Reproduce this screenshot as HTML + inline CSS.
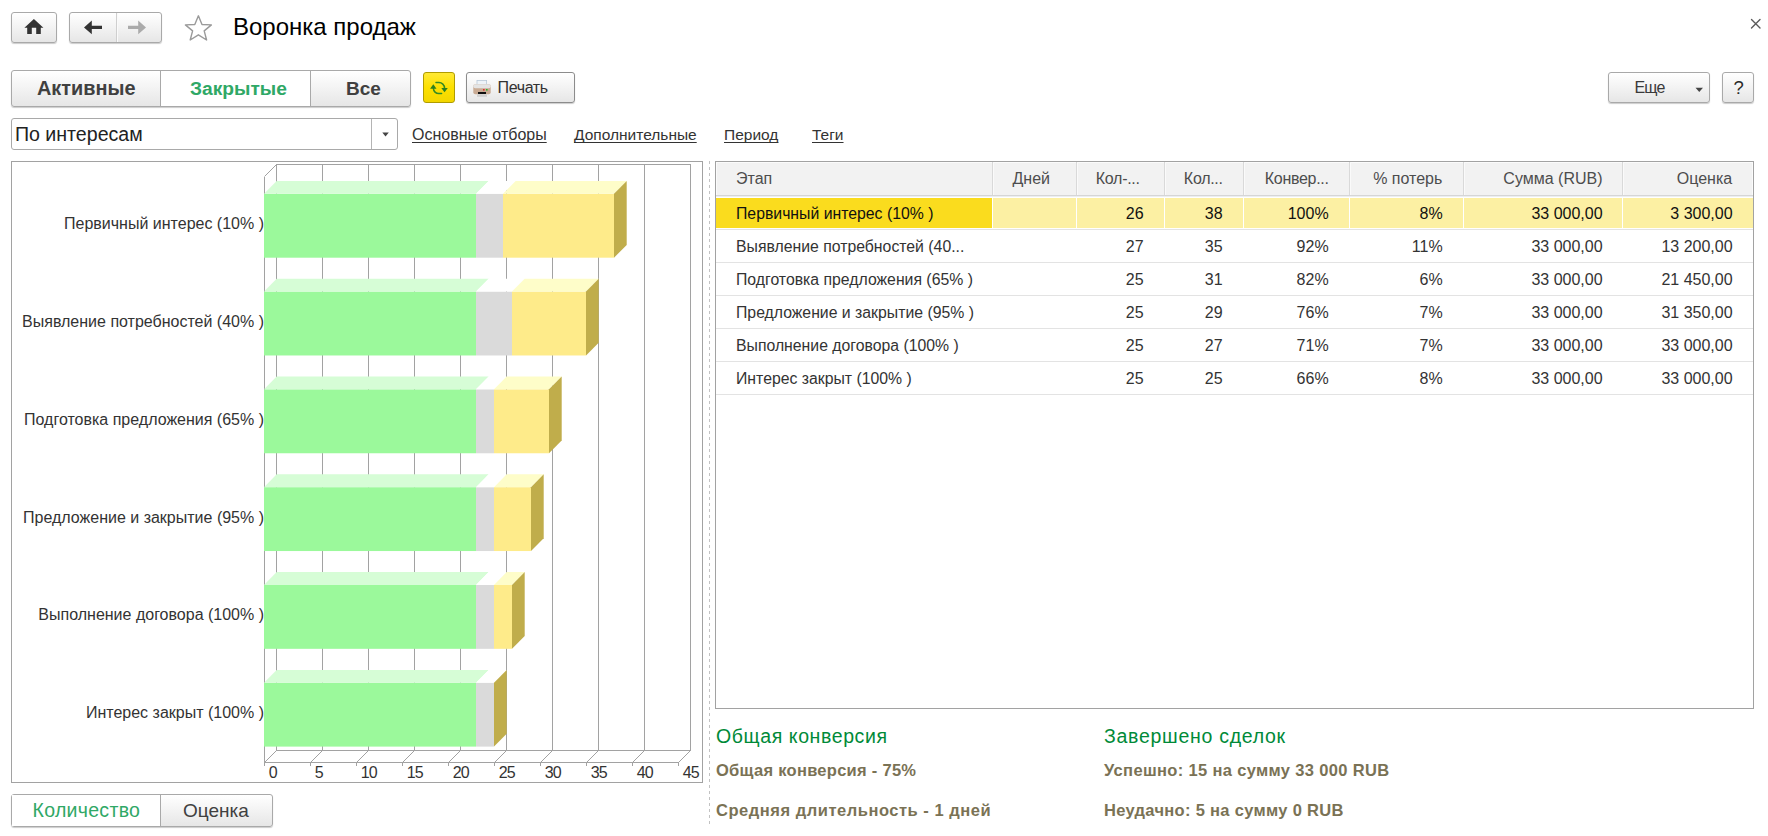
<!DOCTYPE html>
<html><head><meta charset="utf-8">
<style>
html,body{margin:0;padding:0;background:#fff;width:1768px;height:836px;overflow:hidden;position:relative;font-family:"Liberation Sans",sans-serif;}
.a{position:absolute;white-space:nowrap;}
.btn{position:absolute;box-sizing:border-box;border:1px solid #a9a9a9;border-radius:3px;background:linear-gradient(#ffffff,#f4f4f4 45%,#e6e6e6);box-shadow:0 1px 1px rgba(0,0,0,0.2);}
.t{position:absolute;white-space:nowrap;line-height:1;}
</style></head><body>

<!-- top bar -->
<div class="btn" style="left:11px;top:12px;width:46px;height:31px;"></div>
<svg class="a" style="left:0;top:0" width="240" height="50">
  <path d="M33.9 19.1 L43.4 27.7 L40.8 27.7 L40.8 34 L36.2 34 L36.2 27.7 L31.8 27.7 L31.8 34 L27.2 34 L27.2 27.7 L24.4 27.7 Z" fill="#333"/>
</svg>
<div class="btn" style="left:69px;top:12px;width:93px;height:31px;"></div>
<div class="a" style="left:116px;top:13px;width:1px;height:29px;background:#cfcfcf"></div><div class="a" style="left:117px;top:13px;width:1px;height:29px;background:#fafafa"></div>
<svg class="a" style="left:0;top:0" width="240" height="50">
  <path d="M84 27.4 L91.8 20.5 L91.8 25.7 L102 25.7 L102 29 L91.8 29 L91.8 34.3 Z" fill="#333"/>
  <path d="M146 27.4 L138.2 20.5 L138.2 25.8 L128 25.8 L128 29 L138.2 29 L138.2 34.3 Z" fill="#ababab"/>
  <path d="M198.4 15.8 L202 24.5 L211.4 24.9 L204.2 30.9 L206.6 40 L198.4 34.8 L190.2 40 L192.6 30.9 L185.4 24.9 L194.8 24.5 Z" fill="none" stroke="#9a9a9a" stroke-width="1.4" stroke-linejoin="round"/>
</svg>
<div class="t" style="left:233px;top:15px;font-size:24px;color:#000;">Воронка продаж</div>
<svg class="a" style="left:1748px;top:16px" width="16" height="16">
  <path d="M3.5 3.4 L12 11.9 M12 3.4 L3.5 11.9" stroke="#5a5a5a" stroke-width="1.4" stroke-linecap="round"/>
</svg>

<!-- row 2 -->
<div class="btn" style="left:11px;top:70px;width:400px;height:37px;"></div>
<div class="a" style="left:161px;top:71px;width:149px;height:35px;background:#fff"></div>
<div class="a" style="left:160px;top:71px;width:1px;height:35px;background:#a9a9a9"></div>
<div class="a" style="left:310px;top:71px;width:1px;height:35px;background:#a9a9a9"></div>
<div class="t" style="left:37px;top:78.8px;font-size:19.9px;font-weight:bold;color:#404040;">Активные</div>
<div class="t" style="left:190px;top:79px;font-size:19.2px;font-weight:bold;color:#2fa866;">Закрытые</div>
<div class="t" style="left:346px;top:79px;font-size:19px;font-weight:bold;color:#404040;">Все</div>

<div class="a" style="left:423px;top:72px;width:32px;height:31px;box-sizing:border-box;border:1px solid #b09c00;border-radius:3px;background:linear-gradient(#ffe935,#fde000 50%,#f3d600);"></div>
<svg class="a" style="left:423px;top:72px" width="32" height="31">
  <g fill="none" stroke="#348a22" stroke-width="1.5" stroke-linecap="round">
    <path d="M13 10.5 L15.9 10.5 A5.6 5.6 0 0 1 21.5 16"/>
    <path d="M10.4 16.4 A5.4 5.4 0 0 0 15.8 21.6 L18.6 21.6"/>
  </g>
  <path d="M7.1 16.7 L10.3 12.3 L13.5 16.7 Z" fill="#2e7f1e"/>
  <path d="M18.3 16.1 L21.5 20.3 L24.8 16.1 Z" fill="#2e7f1e"/>
</svg>

<div class="btn" style="left:466px;top:72px;width:109px;height:31px;border-color:#8c8c8c;"></div>
<svg class="a" style="left:466px;top:72px" width="30" height="31">
  <rect x="11" y="8.5" width="9.6" height="7" fill="#eef3f8" stroke="#b8c8d8" stroke-width="0.8"/>
  <rect x="7.3" y="12.2" width="17.4" height="10" rx="2" fill="#c9ab94"/>
  <rect x="7.3" y="12.2" width="17.4" height="4" rx="2" fill="#e4e4e4"/>
  <rect x="12" y="20" width="8" height="2" fill="#111"/>
  <rect x="17" y="17" width="1.6" height="1.6" fill="#e03030"/>
  <rect x="20" y="17" width="1.6" height="1.6" fill="#30b030"/>
  <rect x="11" y="22.4" width="10" height="2.4" fill="#d0d0d0"/>
</svg>
<div class="t" style="left:497.5px;top:79.5px;font-size:16px;letter-spacing:-0.35px;color:#333;">Печать</div>

<div class="btn" style="left:1608px;top:72px;width:102px;height:31px;"></div>
<div class="t" style="left:1634.5px;top:79.5px;font-size:16px;letter-spacing:-0.8px;color:#3a3a3a;">Еще</div>
<svg class="a" style="left:1690px;top:80px" width="20" height="20">
  <path d="M5.5 7.8 L13 7.8 L9.25 12 Z" fill="#444"/>
</svg>
<div class="btn" style="left:1722px;top:72px;width:32px;height:31px;"></div>
<div class="t" style="left:1733.5px;top:78.8px;font-size:18.5px;color:#2a2a2a;">?</div>

<!-- row 3 -->
<div class="a" style="left:11px;top:118px;width:387px;height:32px;box-sizing:border-box;border:1px solid #a9a9a9;border-radius:3px;background:#fff"></div>
<div class="a" style="left:371px;top:119px;width:1px;height:30px;background:#b4b4b4"></div>
<svg class="a" style="left:371px;top:118px" width="27" height="32">
  <path d="M11.3 14.4 L17.8 14.4 L14.55 18.4 Z" fill="#444"/>
</svg>
<div class="t" style="left:14.9px;top:124.5px;font-size:19.6px;color:#222;">По интересам</div>

<div class="t" style="left:412px;top:126.5px;font-size:16px;color:#333;text-decoration:underline;text-underline-offset:2px;text-decoration-skip-ink:none;">Основные отборы</div>
<div class="t" style="left:574px;top:126.5px;font-size:15.5px;color:#333;text-decoration:underline;text-underline-offset:2px;text-decoration-skip-ink:none;">Дополнительные</div>
<div class="t" style="left:724px;top:126.5px;font-size:15.5px;color:#333;text-decoration:underline;text-underline-offset:2px;text-decoration-skip-ink:none;">Период</div>
<div class="t" style="left:812px;top:126.5px;font-size:15.5px;color:#333;text-decoration:underline;text-underline-offset:2px;text-decoration-skip-ink:none;">Теги</div>

<!-- CHART -->
<svg class="a" style="left:0;top:0" width="710" height="790" shape-rendering="auto">
<rect x="11.5" y="161.5" width="691" height="621" fill="#fff" stroke="#a2a2a2" stroke-width="1"/>
<path d="M276.5 164.5 L276.5 750.5 M322.5 164.5 L322.5 750.5 M368.5 164.5 L368.5 750.5 M414.5 164.5 L414.5 750.5 M460.5 164.5 L460.5 750.5 M506.5 164.5 L506.5 750.5 M552.5 164.5 L552.5 750.5 M598.5 164.5 L598.5 750.5 M644.5 164.5 L644.5 750.5 M690.5 164.5 L690.5 750.5 M276.5 164.5 L690.5 164.5 M276.5 750.5 L690.5 750.5 M264.5 176.5 L264.5 762.5 M264.5 176.5 L276.5 164.5 M264.5 762.5 L678.5 762.5 M264.5 762.5 L276.5 750.5 M264.5 762.5 L264.5 765.5 M310.5 762.5 L322.5 750.5 M310.5 762.5 L310.5 765.5 M356.5 762.5 L368.5 750.5 M356.5 762.5 L356.5 765.5 M402.5 762.5 L414.5 750.5 M402.5 762.5 L402.5 765.5 M448.5 762.5 L460.5 750.5 M448.5 762.5 L448.5 765.5 M494.5 762.5 L506.5 750.5 M494.5 762.5 L494.5 765.5 M540.5 762.5 L552.5 750.5 M540.5 762.5 L540.5 765.5 M586.5 762.5 L598.5 750.5 M586.5 762.5 L586.5 765.5 M632.5 762.5 L644.5 750.5 M632.5 762.5 L632.5 765.5 M678.5 762.5 L690.5 750.5 M678.5 762.5 L678.5 765.5" stroke="#a2a2a2" stroke-width="1" fill="none" shape-rendering="crispEdges"/>
<path d="M264.5 762.5 L276.5 750.5 M310.5 762.5 L322.5 750.5 M356.5 762.5 L368.5 750.5 M402.5 762.5 L414.5 750.5 M448.5 762.5 L460.5 750.5 M494.5 762.5 L506.5 750.5 M540.5 762.5 L552.5 750.5 M586.5 762.5 L598.5 750.5 M632.5 762.5 L644.5 750.5 M678.5 762.5 L690.5 750.5 M264.5 176.5 L276.5 164.5" stroke="#a2a2a2" stroke-width="1" fill="none"/>
<rect x="264.0" y="193.80" width="212.00" height="63.9" fill="#9bf99b"/>
<path d="M264.0 193.80 L476.00 193.80 L488.70 181.00 L276.7 181.00 Z" fill="#d6fdd6"/>
<rect x="476.00" y="193.80" width="27.00" height="63.9" fill="#dadada"/>
<path d="M476.00 193.80 L503.00 193.80 L515.70 181.00 L488.70 181.00 Z" fill="#fff"/>
<rect x="503.00" y="193.80" width="111.00" height="63.9" fill="#feeb8a"/>
<path d="M503.00 193.80 L614.00 193.80 L626.70 181.00 L515.70 181.00 Z" fill="#fefdc9"/>
<path d="M614.00 193.80 L626.70 181.00 L626.70 244.90 L614.00 257.70 Z" fill="#c0ad4b"/>
<text x="264" y="229.3" text-anchor="end" font-family="Liberation Sans" font-size="16" fill="#333">Первичный интерес (10% )</text>
<rect x="264.0" y="291.58" width="212.00" height="63.9" fill="#9bf99b"/>
<path d="M264.0 291.58 L476.00 291.58 L488.70 278.78 L276.7 278.78 Z" fill="#d6fdd6"/>
<rect x="476.00" y="291.58" width="36.00" height="63.9" fill="#dadada"/>
<path d="M476.00 291.58 L512.00 291.58 L524.70 278.78 L488.70 278.78 Z" fill="#fff"/>
<rect x="512.00" y="291.58" width="74.00" height="63.9" fill="#feeb8a"/>
<path d="M512.00 291.58 L586.00 291.58 L598.70 278.78 L524.70 278.78 Z" fill="#fefdc9"/>
<path d="M586.00 291.58 L598.70 278.78 L598.70 342.68 L586.00 355.48 Z" fill="#c0ad4b"/>
<text x="264" y="327.1" text-anchor="end" font-family="Liberation Sans" font-size="16" fill="#333">Выявление потребностей (40% )</text>
<rect x="264.0" y="389.36" width="212.00" height="63.9" fill="#9bf99b"/>
<path d="M264.0 389.36 L476.00 389.36 L488.70 376.56 L276.7 376.56 Z" fill="#d6fdd6"/>
<rect x="476.00" y="389.36" width="18.00" height="63.9" fill="#dadada"/>
<path d="M476.00 389.36 L494.00 389.36 L506.70 376.56 L488.70 376.56 Z" fill="#fff"/>
<rect x="494.00" y="389.36" width="55.00" height="63.9" fill="#feeb8a"/>
<path d="M494.00 389.36 L549.00 389.36 L561.70 376.56 L506.70 376.56 Z" fill="#fefdc9"/>
<path d="M549.00 389.36 L561.70 376.56 L561.70 440.46 L549.00 453.26 Z" fill="#c0ad4b"/>
<text x="264" y="424.9" text-anchor="end" font-family="Liberation Sans" font-size="16" fill="#333">Подготовка предложения (65% )</text>
<rect x="264.0" y="487.14" width="212.00" height="63.9" fill="#9bf99b"/>
<path d="M264.0 487.14 L476.00 487.14 L488.70 474.34 L276.7 474.34 Z" fill="#d6fdd6"/>
<rect x="476.00" y="487.14" width="18.00" height="63.9" fill="#dadada"/>
<path d="M476.00 487.14 L494.00 487.14 L506.70 474.34 L488.70 474.34 Z" fill="#fff"/>
<rect x="494.00" y="487.14" width="37.00" height="63.9" fill="#feeb8a"/>
<path d="M494.00 487.14 L531.00 487.14 L543.70 474.34 L506.70 474.34 Z" fill="#fefdc9"/>
<path d="M531.00 487.14 L543.70 474.34 L543.70 538.24 L531.00 551.04 Z" fill="#c0ad4b"/>
<text x="264" y="522.6" text-anchor="end" font-family="Liberation Sans" font-size="16" fill="#333">Предложение и закрытие (95% )</text>
<rect x="264.0" y="584.92" width="212.00" height="63.9" fill="#9bf99b"/>
<path d="M264.0 584.92 L476.00 584.92 L488.70 572.12 L276.7 572.12 Z" fill="#d6fdd6"/>
<rect x="476.00" y="584.92" width="18.00" height="63.9" fill="#dadada"/>
<path d="M476.00 584.92 L494.00 584.92 L506.70 572.12 L488.70 572.12 Z" fill="#fff"/>
<rect x="494.00" y="584.92" width="18.00" height="63.9" fill="#feeb8a"/>
<path d="M494.00 584.92 L512.00 584.92 L524.70 572.12 L506.70 572.12 Z" fill="#fefdc9"/>
<path d="M512.00 584.92 L524.70 572.12 L524.70 636.02 L512.00 648.82 Z" fill="#c0ad4b"/>
<text x="264" y="620.4" text-anchor="end" font-family="Liberation Sans" font-size="16" fill="#333">Выполнение договора (100% )</text>
<rect x="264.0" y="682.70" width="212.00" height="63.9" fill="#9bf99b"/>
<path d="M264.0 682.70 L476.00 682.70 L488.70 669.90 L276.7 669.90 Z" fill="#d6fdd6"/>
<rect x="476.00" y="682.70" width="18.00" height="63.9" fill="#dadada"/>
<path d="M476.00 682.70 L494.00 682.70 L506.70 669.90 L488.70 669.90 Z" fill="#fff"/>
<path d="M494.00 682.70 L506.70 669.90 L506.70 733.80 L494.00 746.60 Z" fill="#c0ad4b"/>
<text x="264" y="718.2" text-anchor="end" font-family="Liberation Sans" font-size="16" fill="#333">Интерес закрыт (100% )</text>
<text x="268.8" y="778" font-family="Liberation Sans" font-size="16" letter-spacing="-0.9" fill="#333">0</text>
<text x="314.8" y="778" font-family="Liberation Sans" font-size="16" letter-spacing="-0.9" fill="#333">5</text>
<text x="360.8" y="778" font-family="Liberation Sans" font-size="16" letter-spacing="-0.9" fill="#333">10</text>
<text x="406.8" y="778" font-family="Liberation Sans" font-size="16" letter-spacing="-0.9" fill="#333">15</text>
<text x="452.8" y="778" font-family="Liberation Sans" font-size="16" letter-spacing="-0.9" fill="#333">20</text>
<text x="498.8" y="778" font-family="Liberation Sans" font-size="16" letter-spacing="-0.9" fill="#333">25</text>
<text x="544.8" y="778" font-family="Liberation Sans" font-size="16" letter-spacing="-0.9" fill="#333">30</text>
<text x="590.8" y="778" font-family="Liberation Sans" font-size="16" letter-spacing="-0.9" fill="#333">35</text>
<text x="636.8" y="778" font-family="Liberation Sans" font-size="16" letter-spacing="-0.9" fill="#333">40</text>
<text x="682.8" y="778" font-family="Liberation Sans" font-size="16" letter-spacing="-0.9" fill="#333">45</text>
</svg>

<!-- dashed separator -->
<div class="a" style="left:709px;top:161px;width:1px;height:663px;background:repeating-linear-gradient(#c2c2c2 0 3px,transparent 3px 6px);"></div>

<!-- TABLE -->
<div class="a" style="left:715px;top:161px;width:1039px;height:548px;box-sizing:border-box;border:1px solid #a2a2a2;background:#fff"></div>
<div class="a" style="left:716px;top:162px;width:1037px;height:33px;background:#f2f2f2;box-sizing:border-box;border:1px solid #fbfbfb;border-bottom:none"></div>
<div class="a" style="left:716px;top:195px;width:1037px;height:1px;background:#d6d6d6"></div>
<div class="a" style="left:716px;top:196px;width:1037px;height:1px;background:#eceef0"></div>
<div class="a" style="left:992px;top:162px;width:1px;height:33px;background:#d9d9d9"></div>
<div class="a" style="left:993px;top:162px;width:1px;height:33px;background:#fafafa"></div>
<div class="a" style="left:1076px;top:162px;width:1px;height:33px;background:#d9d9d9"></div>
<div class="a" style="left:1077px;top:162px;width:1px;height:33px;background:#fafafa"></div>
<div class="a" style="left:1164px;top:162px;width:1px;height:33px;background:#d9d9d9"></div>
<div class="a" style="left:1165px;top:162px;width:1px;height:33px;background:#fafafa"></div>
<div class="a" style="left:1243px;top:162px;width:1px;height:33px;background:#d9d9d9"></div>
<div class="a" style="left:1244px;top:162px;width:1px;height:33px;background:#fafafa"></div>
<div class="a" style="left:1349px;top:162px;width:1px;height:33px;background:#d9d9d9"></div>
<div class="a" style="left:1350px;top:162px;width:1px;height:33px;background:#fafafa"></div>
<div class="a" style="left:1463px;top:162px;width:1px;height:33px;background:#d9d9d9"></div>
<div class="a" style="left:1464px;top:162px;width:1px;height:33px;background:#fafafa"></div>
<div class="a" style="left:1622px;top:162px;width:1px;height:33px;background:#d9d9d9"></div>
<div class="a" style="left:1623px;top:162px;width:1px;height:33px;background:#fafafa"></div>
<div class="t" style="left:736px;top:170.5px;font-size:16px;color:#4d4d4d;">Этап</div>
<div class="t" style="right:718px;top:170.5px;font-size:16px;color:#4d4d4d;">Дней</div>
<div class="t" style="right:628.4000000000001px;top:170.5px;font-size:16px;letter-spacing:-0.3px;color:#4d4d4d;">Кол-...</div>
<div class="t" style="right:545.4000000000001px;top:170.5px;font-size:16px;letter-spacing:-0.3px;color:#4d4d4d;">Кол...</div>
<div class="t" style="right:439.4000000000001px;top:170.5px;font-size:16px;letter-spacing:-0.3px;color:#4d4d4d;">Конвер...</div>
<div class="t" style="right:325.70000000000005px;top:170.5px;font-size:16px;color:#4d4d4d;">% потерь</div>
<div class="t" style="right:165.5px;top:170.5px;font-size:16px;color:#4d4d4d;">Сумма (RUB)</div>
<div class="t" style="right:35.799999999999955px;top:170.5px;font-size:16px;color:#4d4d4d;">Оценка</div>
<div class="a" style="left:716px;top:198px;width:276px;height:30px;background:#fadc1e"></div>
<div class="a" style="left:993px;top:198px;width:83px;height:30px;background:#fcf0a3"></div>
<div class="a" style="left:1077px;top:198px;width:87px;height:30px;background:#fcf0a3"></div>
<div class="a" style="left:1165px;top:198px;width:78px;height:30px;background:#fcf0a3"></div>
<div class="a" style="left:1244px;top:198px;width:105px;height:30px;background:#fcf0a3"></div>
<div class="a" style="left:1350px;top:198px;width:113px;height:30px;background:#fcf0a3"></div>
<div class="a" style="left:1464px;top:198px;width:158px;height:30px;background:#fcf0a3"></div>
<div class="a" style="left:1623px;top:198px;width:130px;height:30px;background:#fcf0a3"></div>
<div class="a" style="left:716px;top:229px;width:1037px;height:1px;background:#e3e3e3"></div>
<div class="t" style="left:736px;top:206.1px;font-size:15.8px;color:#111;">Первичный интерес (10% )</div>
<div class="t" style="right:624.4000000000001px;top:206.1px;font-size:16px;color:#111;">26</div>
<div class="t" style="right:545.4000000000001px;top:206.1px;font-size:16px;color:#111;">38</div>
<div class="t" style="right:439.4000000000001px;top:206.1px;font-size:16px;color:#111;">100%</div>
<div class="t" style="right:325.4000000000001px;top:206.1px;font-size:16px;color:#111;">8%</div>
<div class="t" style="right:165.4000000000001px;top:206.1px;font-size:16px;color:#111;">33 000,00</div>
<div class="t" style="right:35.40000000000009px;top:206.1px;font-size:16px;color:#111;">3 300,00</div>
<div class="a" style="left:716px;top:262px;width:1037px;height:1px;background:#e3e3e3"></div>
<div class="t" style="left:736px;top:239.1px;font-size:15.8px;color:#333;">Выявление потребностей (40...</div>
<div class="t" style="right:624.4000000000001px;top:239.1px;font-size:16px;color:#333;">27</div>
<div class="t" style="right:545.4000000000001px;top:239.1px;font-size:16px;color:#333;">35</div>
<div class="t" style="right:439.4000000000001px;top:239.1px;font-size:16px;color:#333;">92%</div>
<div class="t" style="right:325.4000000000001px;top:239.1px;font-size:16px;color:#333;">11%</div>
<div class="t" style="right:165.4000000000001px;top:239.1px;font-size:16px;color:#333;">33 000,00</div>
<div class="t" style="right:35.40000000000009px;top:239.1px;font-size:16px;color:#333;">13 200,00</div>
<div class="a" style="left:716px;top:295px;width:1037px;height:1px;background:#e3e3e3"></div>
<div class="t" style="left:736px;top:272.1px;font-size:15.8px;color:#333;">Подготовка предложения (65% )</div>
<div class="t" style="right:624.4000000000001px;top:272.1px;font-size:16px;color:#333;">25</div>
<div class="t" style="right:545.4000000000001px;top:272.1px;font-size:16px;color:#333;">31</div>
<div class="t" style="right:439.4000000000001px;top:272.1px;font-size:16px;color:#333;">82%</div>
<div class="t" style="right:325.4000000000001px;top:272.1px;font-size:16px;color:#333;">6%</div>
<div class="t" style="right:165.4000000000001px;top:272.1px;font-size:16px;color:#333;">33 000,00</div>
<div class="t" style="right:35.40000000000009px;top:272.1px;font-size:16px;color:#333;">21 450,00</div>
<div class="a" style="left:716px;top:328px;width:1037px;height:1px;background:#e3e3e3"></div>
<div class="t" style="left:736px;top:305.1px;font-size:15.8px;color:#333;">Предложение и закрытие (95% )</div>
<div class="t" style="right:624.4000000000001px;top:305.1px;font-size:16px;color:#333;">25</div>
<div class="t" style="right:545.4000000000001px;top:305.1px;font-size:16px;color:#333;">29</div>
<div class="t" style="right:439.4000000000001px;top:305.1px;font-size:16px;color:#333;">76%</div>
<div class="t" style="right:325.4000000000001px;top:305.1px;font-size:16px;color:#333;">7%</div>
<div class="t" style="right:165.4000000000001px;top:305.1px;font-size:16px;color:#333;">33 000,00</div>
<div class="t" style="right:35.40000000000009px;top:305.1px;font-size:16px;color:#333;">31 350,00</div>
<div class="a" style="left:716px;top:361px;width:1037px;height:1px;background:#e3e3e3"></div>
<div class="t" style="left:736px;top:338.1px;font-size:15.8px;color:#333;">Выполнение договора (100% )</div>
<div class="t" style="right:624.4000000000001px;top:338.1px;font-size:16px;color:#333;">25</div>
<div class="t" style="right:545.4000000000001px;top:338.1px;font-size:16px;color:#333;">27</div>
<div class="t" style="right:439.4000000000001px;top:338.1px;font-size:16px;color:#333;">71%</div>
<div class="t" style="right:325.4000000000001px;top:338.1px;font-size:16px;color:#333;">7%</div>
<div class="t" style="right:165.4000000000001px;top:338.1px;font-size:16px;color:#333;">33 000,00</div>
<div class="t" style="right:35.40000000000009px;top:338.1px;font-size:16px;color:#333;">33 000,00</div>
<div class="a" style="left:716px;top:394px;width:1037px;height:1px;background:#e3e3e3"></div>
<div class="t" style="left:736px;top:371.1px;font-size:15.8px;color:#333;">Интерес закрыт (100% )</div>
<div class="t" style="right:624.4000000000001px;top:371.1px;font-size:16px;color:#333;">25</div>
<div class="t" style="right:545.4000000000001px;top:371.1px;font-size:16px;color:#333;">25</div>
<div class="t" style="right:439.4000000000001px;top:371.1px;font-size:16px;color:#333;">66%</div>
<div class="t" style="right:325.4000000000001px;top:371.1px;font-size:16px;color:#333;">8%</div>
<div class="t" style="right:165.4000000000001px;top:371.1px;font-size:16px;color:#333;">33 000,00</div>
<div class="t" style="right:35.40000000000009px;top:371.1px;font-size:16px;color:#333;">33 000,00</div>

<!-- footer -->
<div class="t" style="left:716px;top:726.5px;font-size:19.5px;letter-spacing:0.6px;color:#008a38;">Общая конверсия</div>
<div class="t" style="left:716px;top:762px;font-size:16.5px;font-weight:bold;letter-spacing:0.28px;color:#7a7255;">Общая конверсия - 75%</div>
<div class="t" style="left:716px;top:802px;font-size:16.5px;font-weight:bold;letter-spacing:0.53px;color:#7a7255;">Средняя длительность - 1 дней</div>
<div class="t" style="left:1104px;top:726.5px;font-size:19.5px;letter-spacing:0.72px;color:#008a38;">Завершено сделок</div>
<div class="t" style="left:1104px;top:762px;font-size:16.5px;font-weight:bold;letter-spacing:0.34px;color:#7a7255;">Успешно: 15 на сумму 33 000 RUB</div>
<div class="t" style="left:1104px;top:802px;font-size:16.5px;font-weight:bold;letter-spacing:0.31px;color:#7a7255;">Неудачно: 5 на сумму 0 RUB</div>

<!-- bottom buttons -->
<div class="btn" style="left:11px;top:794px;width:262px;height:33px;"></div>
<div class="a" style="left:12px;top:795px;width:148px;height:31px;background:#fff"></div>
<div class="a" style="left:160px;top:795px;width:1px;height:31px;background:#a9a9a9"></div>
<div class="t" style="left:32.5px;top:800.5px;font-size:19.5px;letter-spacing:0.3px;color:#2fa866;">Количество</div>
<div class="t" style="left:183px;top:801px;font-size:19px;color:#404040;">Оценка</div>

</body></html>
